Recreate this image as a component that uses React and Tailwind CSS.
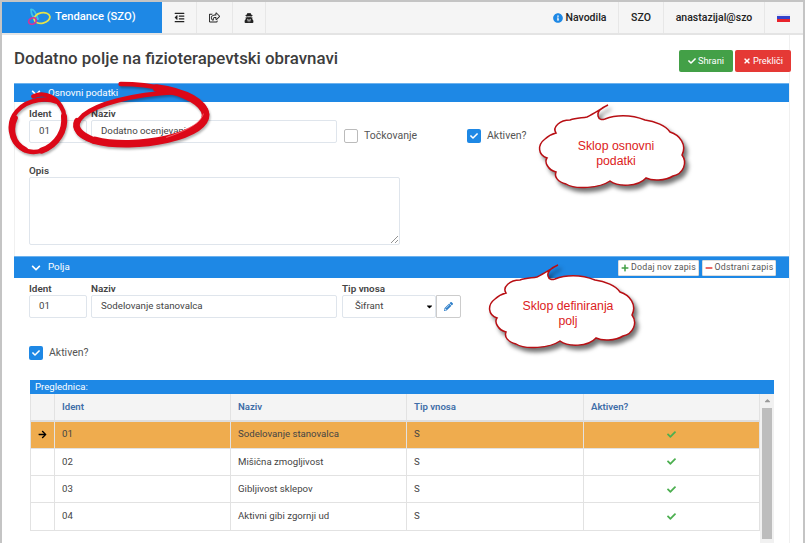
import { FaOutdent, FaRegShareSquare, FaUserSecret, FaInfoCircle, FaCheck, FaTimes, FaChevronDown, FaPlus, FaMinus, FaPencilAlt, FaArrowRight, FaCaretDown, FaCaretUp } from "react-icons/fa";

const rows = [
  { id: "01", name: "Sodelovanje stanovalca", active: true },
  { id: "02", name: "Mišična zmogljivost" },
  { id: "03", name: "Gibljivost sklepov" },
  { id: "04", name: "Aktivni gibi zgornji ud" },
];

const cloudPath =
  "M57 17 C64 14 72 8 78 5 C71 8 67 12 68 16 C69 20 72 20 75 19 C85 15 100 14 115 20 C125 21 136 26 140 32 C150 35 157 45 152 55 C158 63 153 74 143 76 C135 81 122 81 116 78 C108 87 88 87 80 81 C70 88 45 90 36 84 C28 82 24 77 26 72 C18 70 14 62 17 58 C8 55 7 45 15 39 C18 36 22 34 26 33 C22 27 30 20 40 20 C46 18 52 18 57 17 Z";

const Cloud = ({ className, textClass, lines }) => (
  <div className={`absolute w-[170px] h-[95px] ${className}`}>
    <svg viewBox="0 0 170 95" className="w-full h-full drop-shadow-[3px_4px_2px_rgba(0,0,0,0.55)]">
      <path d={cloudPath} fill="#fff" stroke="#b80f14" strokeWidth="1.5" />
    </svg>
    <div className={`absolute top-[39px] w-[160px] text-center text-[12.3px] leading-[15px] text-[#dc1c22] font-['Liberation_Sans',sans-serif] ${textClass}`}>
      {lines.map((l) => (
        <div key={l}>{l}</div>
      ))}
    </div>
  </div>
);

const Scribbles = () => (
  <svg viewBox="0 0 690 240" className="absolute left-0 top-[78px] w-[230px] h-[80px] blur-[0.4px] drop-shadow-[1px_2px_1px_rgba(0,0,0,0.3)]" fill="none" stroke="#dc0818" strokeLinecap="round" strokeLinejoin="round">
    <path d="M100 55 C135 38 175 60 190 100 C202 150 172 205 125 218 C80 232 40 205 33 160 C26 115 60 75 115 66 C140 62 155 65 172 72" strokeWidth="13" />
    <path d="M192 115 C197 155 174 200 125 218" strokeWidth="18" />
    <path d="M45 120 C30 150 35 195 75 215" strokeWidth="17" />
    <path d="M362 18 C450 18 560 40 605 80 C640 115 610 150 540 172 C460 198 340 205 280 188 C225 172 215 145 250 112 C290 78 390 50 530 42" strokeWidth="14" />
    <path d="M470 30 C560 42 612 75 617 110 C617 142 570 167 500 184 C430 200 340 202 285 187" strokeWidth="23" />
    <path d="M232 130 C222 150 240 172 280 187" strokeWidth="20" />
    <path d="M500 178 C560 158 602 135 610 108" stroke="#ff8d92" strokeWidth="2" />
  </svg>
);

const Logo = () => (
  <svg viewBox="0 0 24 20" className="w-[24px] h-[20px]" fill="none" strokeWidth="1.8">
    <path d="M4 1.5 C7 0.5 9 5 11 11 C8 12 4 8 4 1.5 Z" stroke="#3fc4ea" />
    <ellipse cx="15" cy="10" rx="8" ry="5.2" transform="rotate(-12 15 10)" stroke="#e6e24a" />
    <ellipse cx="5.5" cy="13" rx="4" ry="3" transform="rotate(-25 5.5 13)" stroke="#d0369a" />
  </svg>
);

const Label = ({ children }) => (
  <label className="block text-[9.9px] leading-[13px] font-semibold text-[#444]">{children}</label>
);

const Input = ({ value, className }) => (
  <div className={`h-[23px] border border-[#dfe5ec] rounded-[2px] bg-white flex items-center text-[9.7px] text-[#444] ${className}`}>
    {value}
  </div>
);

const Check = ({ checked, label, className }) => (
  <div className={`flex items-center ${className}`}>
    {checked ? (
      <span className="w-[14px] h-[14px] rounded-[2px] bg-[#1e88e5] flex items-center justify-center">
        <FaCheck className="text-white text-[8px]" />
      </span>
    ) : (
      <span className="w-[14px] h-[14px] rounded-[2px] border border-[#bbb] bg-white" />
    )}
    <span className="ml-[6px] text-[10.5px] text-[#555]">{label}</span>
  </div>
);

const Bar = ({ title, className, children }) => (
  <div className={`bg-[#1e88e5] border-t border-[#6db2ee] flex items-center text-white text-[9.8px] ${className}`}>
    <FaChevronDown className="ml-[17px] text-[10px]" />
    <span className="ml-[7px]">{title}</span>
    {children}
  </div>
);

const SmallBtn = ({ icon, text, className }) => (
  <button className={`h-[16px] bg-white border border-[#ddd] rounded-[1px] flex items-center justify-center gap-[2px] whitespace-nowrap text-[8.8px] tracking-[0.2px] text-[#555] ${className}`}>
    {icon}
    {text}
  </button>
);

const NavCell = ({ children, className }) => (
  <div className={`h-full flex items-center justify-center border-r border-[#e7e7e7] text-[#222] ${className}`}>{children}</div>
);

export default function App() {
  return (
    <div className="relative w-[807px] h-[543px] overflow-hidden bg-white font-['Roboto',sans-serif]">
      <div className="w-[805px] h-full border-l-2 border-r-2 border-t-2 border-[#c4c4c4]">
        {/* top bar */}
        <div className="h-[33px] bg-[#f5f5f5] border-b-2 border-[#e4e4e4] flex">
          <div className="w-[160px] h-full bg-[#1e88e5] flex items-center pl-[25px]">
            <Logo />
            <span className="ml-[4px] text-white text-[11.2px] font-medium">Tendance (SZO)</span>
          </div>
          <NavCell className="w-[35px]"><FaOutdent className="text-[11px]" /></NavCell>
          <NavCell className="w-[36px]"><FaRegShareSquare className="text-[11px]" /></NavCell>
          <NavCell className="w-[33px]"><FaUserSecret className="text-[10px]" /></NavCell>
          <div className="ml-auto flex h-full text-[10.5px] font-medium">
            <NavCell className="w-[75px] gap-[2px] pr-[2px]"><FaInfoCircle className="text-[#1e88e5] text-[10px]" />Navodila</NavCell>
            <NavCell className="w-[45px]">SZO</NavCell>
            <NavCell className="w-[101px]">anastazijal@szo</NavCell>
            <div className="w-[38px] h-full flex items-center pl-[12px]">
              <div className="w-[13px] h-[8px] flex flex-col">
                <span className="h-[2px] bg-[#e8e8f4]" />
                <span className="h-[3px] bg-[#3344cc]" />
                <span className="h-[3px] bg-[#e8232c]" />
              </div>
            </div>
          </div>
        </div>

        <div className="ml-[12px] w-[776px] h-[508px] border-r border-[#f0f0f0]">
          {/* title */}
          <div className="h-[48px] flex items-center justify-between">
            <h1 className="text-[16.85px] font-medium text-[#3d3d3d]">Dodatno polje na fizioterapevtski obravnavi</h1>
            <div className="flex gap-[2px] mt-[4px] -mr-[2px]">
              <button className="w-[54px] h-[22px] bg-[#43a047] rounded-[2px] text-white text-[9.3px] flex items-center justify-center gap-[2px]">
                <FaCheck className="text-[8px]" />Shrani
              </button>
              <button className="w-[56px] h-[22px] bg-[#e53935] rounded-[2px] text-white text-[9.3px] flex items-center justify-center gap-[2px]">
                <FaTimes className="text-[8px]" />Prekliči
              </button>
            </div>
          </div>

          {/* osnovni podatki */}
          <Bar title="Osnovni podatki" className="h-[19px]" />
          <div className="h-[154px] pl-[14px] pt-[5px] border-l border-[#f0f0f0]">
            <div className="flex">
              <div className="w-[58px]">
                <Label>Ident</Label>
                <Input value="01" className="pl-[9px]" />
              </div>
              <div className="w-[246px] ml-[4px]">
                <Label>Naziv</Label>
                <Input value="Dodatno ocenjevanje" className="pl-[9px]" />
              </div>
              <Check label="Točkovanje" className="w-[123px] ml-[7px] mt-[21px] self-start" />
              <Check checked label="Aktiven?" className="mt-[21px] self-start" />
            </div>
            <div className="mt-[20px]">
              <Label>Opis</Label>
              <div className="relative w-[371px] h-[68px] border border-[#dfe5ec] rounded-[2px]">
                <svg viewBox="0 0 8 8" className="absolute right-[1px] bottom-[1px] w-[8px] h-[8px]" stroke="#777" strokeWidth="0.8">
                  <path d="M1 8 L8 1 M5 8 L8 5" />
                </svg>
              </div>
            </div>
          </div>

          {/* polja */}
          <Bar title="Polja" className="h-[22px]">
            <div className="ml-auto mr-[13px] flex gap-[3px]">
              <SmallBtn className="w-[81px]" icon={<FaPlus className="text-[#43a047] text-[8px]" />} text="Dodaj nov zapis" />
              <SmallBtn className="w-[74px]" icon={<FaMinus className="text-[#e53935] text-[8px]" />} text="Odstrani zapis" />
            </div>
          </Bar>
          <div className="pl-[15px] pt-[4px]">
            <div className="flex">
              <div className="w-[58px]">
                <Label>Ident</Label>
                <Input value="01" className="pl-[9px]" />
              </div>
              <div className="w-[246px] ml-[4px]">
                <Label>Naziv</Label>
                <Input value="Sodelovanje stanovalca" className="pl-[9px]" />
              </div>
              <div className="ml-[5px]">
                <Label>Tip vnosa</Label>
                <div className="flex">
                  <Input value="Šifrant" className="w-[94px] pl-[12px] pr-[6px] justify-between" />
                  <button className="w-[25px] h-[23px] border border-[#ccc] border-l-[#ccc] rounded-r-[2px] flex items-center justify-center">
                    <FaPencilAlt className="text-[#2f7fc9] text-[9px]" />
                  </button>
                </div>
              </div>
            </div>
            <Check checked label="Aktiven?" className="mt-[27px]" />

            {/* preglednica */}
            <div className="mt-[19px] ml-px w-[744px]">
              <div className="h-[14px] bg-[#1e88e5] text-white text-[9.6px] leading-[14px] pl-[5px]">Preglednica:</div>
              <div className="flex">
                <table className="w-[730px] table-fixed border-collapse h-fit text-[9.65px] text-[#444]">
                  <colgroup>
                    <col className="w-[24px]" />
                    <col className="w-[176px]" />
                    <col className="w-[176px]" />
                    <col className="w-[177px]" />
                    <col />
                  </colgroup>
                  <thead>
                    <tr className="h-[27px] bg-[#f4f4f4] text-[#3f6ea8] text-left border-b-[2px] border-[#ddd]">
                      <th className="border-x border-[#e2e2e2]" />
                      <th className="border-x border-[#e2e2e2] pl-[7px] font-semibold">Ident</th>
                      <th className="border-x border-[#e2e2e2] pl-[7px] font-semibold">Naziv</th>
                      <th className="border-x border-[#e2e2e2] pl-[7px] font-semibold">Tip vnosa</th>
                      <th className="border-x border-[#e2e2e2] pl-[7px] font-semibold">Aktiven?</th>
                    </tr>
                  </thead>
                  <tbody>
                    {rows.map((r) => (
                      <tr key={r.id} className={`h-[27.4px] border-b border-[#e2e2e2] ${r.active ? "bg-[#efac4e]" : ""}`}>
                        <td className="border-x border-[#e2e2e2] pl-[7px]">{r.active && <FaArrowRight className="text-black text-[9px]" />}</td>
                        <td className="border-x border-[#e2e2e2] pl-[7px]">{r.id}</td>
                        <td className="border-x border-[#e2e2e2] pl-[7px]">{r.name}</td>
                        <td className="border-x border-[#e2e2e2] pl-[7px]">S</td>
                        <td className="border-x border-[#e2e2e2]">
                          <FaCheck className="mx-auto text-[#4caf50] text-[9px]" />
                        </td>
                      </tr>
                    ))}
                  </tbody>
                </table>
                <div className="w-[14px] h-[150px] bg-[#f1f1f1] flex flex-col items-center">
                  <FaCaretUp className="text-[#999] text-[9px] mt-[2px]" />
                  <div className="w-[10px] h-[131px] mt-[3px] bg-[#bdbdbd]" />
                </div>
              </div>
            </div>
          </div>
        </div>
      </div>

      <FaCaretDown className="absolute left-[425px] top-[302px] text-black text-[9px]" />
      <Scribbles />
      <Cloud className="left-[530px] top-[100px]" textClass="left-[6px]" lines={["Sklop osnovni", "podatki"]} />
      <Cloud className="left-[480px] top-[260px]" textClass="left-[8px]" lines={["Sklop definiranja", "polj"]} />
    </div>
  );
}
